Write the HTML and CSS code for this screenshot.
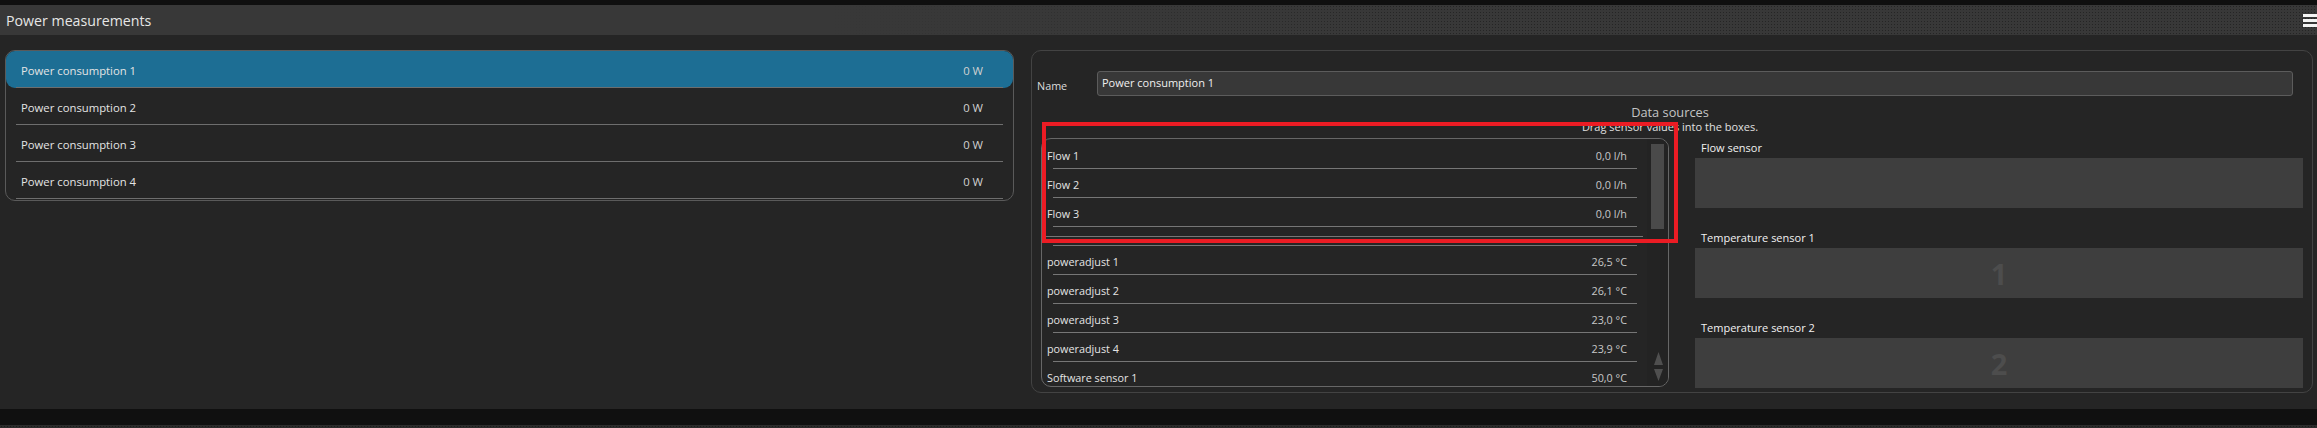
FILE: index.html
```html
<!DOCTYPE html>
<html lang="en">
<head>
    <meta charset="UTF-8">
    <title>Power measurements</title>
    <link rel="stylesheet" href="styles.css">
</head>
<body>
    <div class="top-strip"></div>

    <!-- Title bar -->
    <div class="title-bar">
        <span class="title">Power measurements</span>
        <span class="menu-icon"><i></i><i></i><i></i></span>
    </div>

    <div class="main">
        <!-- Measurement list -->
        <div class="measure-list">
            <div class="measure-row selected"><span>Power consumption 1</span><span class="value">0 W</span></div>
            <div class="measure-row"><span>Power consumption 2</span><span class="value">0 W</span></div>
            <div class="measure-row"><span>Power consumption 3</span><span class="value">0 W</span></div>
            <div class="measure-row"><span>Power consumption 4</span><span class="value">0 W</span></div>
        </div>

        <!-- Details of the selected measurement -->
        <div class="details">
            <div class="name-row">
                <label class="name-label">Name</label>
                <div class="name-input">Power consumption 1</div>
            </div>

            <div class="sources-head">
                <div class="sources-title">Data sources</div>
                <div class="sources-hint">Drag sensor values into the boxes.</div>
            </div>

            <div class="sources-body">
                <div class="source-list">
                    <div class="source-rows">
                        <div class="source-row"><span>Flow 1</span><span class="value">0,0 l/h</span></div>
                        <div class="source-row"><span>Flow 2</span><span class="value">0,0 l/h</span></div>
                        <div class="source-row"><span>Flow 3</span><span class="value">0,0 l/h</span></div>
                        <div class="group-gap"></div>
                        <div class="source-row"><span>poweradjust 1</span><span class="value">26,5 °C</span></div>
                        <div class="source-row"><span>poweradjust 2</span><span class="value">26,1 °C</span></div>
                        <div class="source-row"><span>poweradjust 3</span><span class="value">23,0 °C</span></div>
                        <div class="source-row"><span>poweradjust 4</span><span class="value">23,9 °C</span></div>
                        <div class="source-row"><span>Software sensor 1</span><span class="value">50,0 °C</span></div>
                    </div>
                    <div class="scrollbar">
                        <div class="thumb"></div>
                        <svg class="arrows" width="9" height="29" viewBox="0 0 9 29">
                            <path d="M4.5 0L9 13H0z M0 17H9L4.5 29z" fill="#4f4f4f"/>
                        </svg>
                    </div>
                </div>

                <div class="targets">
                    <div class="target">
                        <div class="target-label">Flow sensor</div>
                        <div class="drop-box"></div>
                    </div>
                    <div class="target">
                        <div class="target-label">Temperature sensor 1</div>
                        <div class="drop-box">1</div>
                    </div>
                    <div class="target">
                        <div class="target-label">Temperature sensor 2</div>
                        <div class="drop-box">2</div>
                    </div>
                </div>
            </div>

            <!-- red annotation frame -->
            <div class="highlight"></div>
        </div>
    </div>

    <div class="footer"></div>
    <div class="footer-line"></div>
</body>
</html>
```

FILE: styles.css
```css
body {
    margin: 0;
    width: 2317px;
    height: 428px;
    overflow: hidden;
    background: #252525;
    color: #e4e4e4;
    font-family: "Open Sans", "Noto Sans", sans-serif;
}
.top-strip {
    height: 5px;
    background: #0f0f0f;
}
.title-bar {
    position: relative;
    height: 30px;
    padding-left: 6px;
    display: flex;
    align-items: center;
    justify-content: space-between;
    background: #383838;
}
/* dotted texture on the right half of the bar */
.title-bar::after {
    content: '';
    position: absolute;
    top: 0;
    left: 0;
    right: 0;
    bottom: 0;
    background-image: radial-gradient(circle, rgba(18, 18, 18, 0.5) 0.7px, transparent 1px);
    background-size: 3px 3px;
    -webkit-mask-image: linear-gradient(to right, transparent 36%, #000 62%);
    mask-image: linear-gradient(to right, transparent 36%, #000 62%);
    pointer-events: none;
}
.title {
    font-size: 14.2px;
    color: #e6e6e6;
}
.menu-icon {
    position: relative;
    z-index: 1;
    width: 14px;
    display: flex;
    flex-direction: column;
    gap: 2px;
}
.menu-icon i {
    height: 3px;
    background: #f4f4f4;
}

.main {
    height: 374px;
    box-sizing: border-box;
    padding: 15px 4px 0 5px;
    display: flex;
    align-items: flex-start;
    gap: 17px;
}

/* left list */
.measure-list {
    width: 1009px;
    flex-shrink: 0;
    box-sizing: border-box;
    padding-bottom: 1px;
    border: 1px solid #5a5a5a;
    border-radius: 10px;
}
.measure-row {
    height: 37px;
    box-sizing: border-box;
    padding: 1px 30px 0 15px;
    display: flex;
    align-items: center;
    justify-content: space-between;
    font-size: 11.3px;
    background: linear-gradient(#6e6e6e, #6e6e6e) no-repeat 10px 100% / calc(100% - 20px) 1px;
}
.measure-row.selected {
    background: linear-gradient(#6e6e6e, #6e6e6e) no-repeat 10px 100% / calc(100% - 20px) 1px, #1d6e94;
    border-radius: 9px;
}
.measure-row .value {
    color: #d2d2d2;
}

/* right panel */
.details {
    position: relative;
    flex: 1;
    height: 343px;
    box-sizing: border-box;
    padding: 20px 9px 0 5px;
    border: 1px solid #434343;
    border-radius: 10px;
}
.name-row {
    height: 25px;
    display: flex;
    align-items: center;
}
.name-label {
    width: 60px;
    padding-top: 3px;
    font-size: 10.8px;
    color: #dcdcdc;
}
.name-input {
    flex: 1;
    height: 25px;
    margin-right: 10px;
    box-sizing: border-box;
    padding-left: 4px;
    background: #383838;
    border: 1px solid #5c5c5c;
    border-radius: 3px;
    font-size: 11px;
    line-height: 22px;
    color: #f0f0f0;
}
.sources-head {
    margin-top: 8px;
    text-align: center;
}
.sources-title {
    font-size: 12.8px;
    line-height: 16px;
    color: #c4c4c4;
}
.sources-hint {
    font-size: 11px;
    line-height: 14px;
    color: #e0e0e0;
}
.sources-body {
    margin-top: 4px;
    padding-left: 4px;
    display: flex;
    gap: 26px;
}

.source-list {
    width: 628px;
    height: 249px;
    box-sizing: border-box;
    border: 1px solid #676767;
    border-radius: 10px;
    display: flex;
    overflow: hidden;
}
.source-rows {
    flex: 1;
    padding-top: 1px;
}
.source-row {
    height: 29px;
    box-sizing: border-box;
    padding: 2px 20px 0 5px;
    display: flex;
    align-items: center;
    justify-content: space-between;
    font-size: 10.8px;
    background: linear-gradient(#767676, #767676) no-repeat 11px 100% / calc(100% - 21px) 1px;
}
.source-row .value {
    color: #c8c8c8;
}
.group-gap {
    height: 19px;
    background:
        linear-gradient(#767676, #767676) no-repeat 0 9px / calc(100% - 4px) 1px,
        linear-gradient(#767676, #767676) no-repeat 11px 18px / calc(100% - 21px) 1px;
}
.scrollbar {
    width: 21px;
    box-sizing: border-box;
    padding: 5px 0;
    display: flex;
    flex-direction: column;
    align-items: center;
    background: #232323;
}
.thumb {
    width: 13px;
    height: 85px;
    background: #4a4a4a;
}
.arrows {
    margin-top: auto;
    margin-left: 2px;
}

.targets {
    flex: 1;
}
.target + .target {
    margin-top: 20px;
}
.target-label {
    height: 20px;
    padding-left: 6px;
    font-size: 11px;
    line-height: 20px;
    color: #f2f2f2;
}
.drop-box {
    height: 50px;
    display: flex;
    align-items: center;
    justify-content: center;
    background: #3e3e3e;
    font-family: "Open Sans", sans-serif;
    font-size: 29px;
    font-weight: bold;
    color: #4d4d4d;
}

.highlight {
    position: absolute;
    left: 10px;
    top: 71px;
    width: 636px;
    height: 121px;
    box-sizing: border-box;
    border: 4px solid #ec1c24;
}

.footer {
    height: 16px;
    background: #101010;
}
.footer-line {
    height: 3px;
    background-color: #2c2c2c;
    background-image: radial-gradient(circle, rgba(16, 16, 16, 0.6) 0.6px, transparent 1px);
    background-size: 3px 3px;
}
```
